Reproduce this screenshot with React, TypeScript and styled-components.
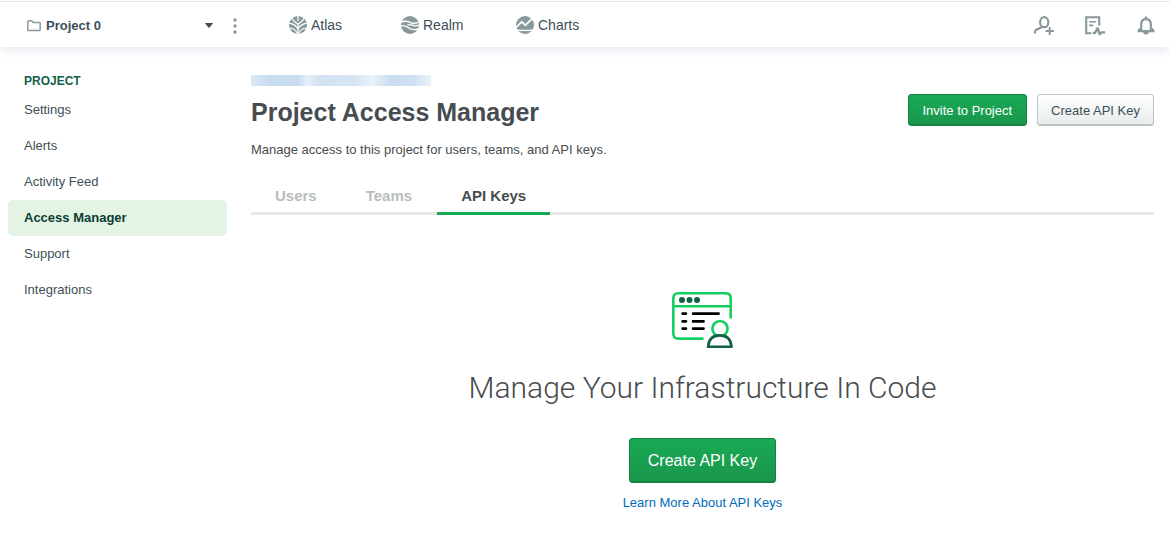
import React from "react";
import styled, { createGlobalStyle } from "styled-components";

const GlobalStyle = createGlobalStyle`
  *, *::before, *::after { box-sizing: border-box; }
  body {
    margin: 0;
    background: #fff;
    color: #464c4f;
    font-family: "Liberation Sans", Arial, sans-serif;
    font-size: 13px;
    line-height: 20px;
  }
  h1, h2, p, ul { margin: 0; padding: 0; }
  button { font-family: inherit; cursor: pointer; }
  a { text-decoration: none; }
  svg { display: block; flex: none; }
`;

const TopBar = styled.header`
  display: flex;
  align-items: center;
  height: 47px;
  padding: 3px 13px 0 27px;
  border-top: 1px solid #fff;
  box-shadow: inset 0 1px 0 #e7eaea, 0 2px 10px rgba(40, 50, 110, 0.14);
`;

const PickerMenu = styled.div`
  display: flex;
  align-items: center;
  gap: 11px;
`;

const ProjectPicker = styled.button`
  display: flex;
  align-items: center;
  gap: 5px;
  width: 186px;
  padding: 0;
  border: 0;
  background: none;
  color: #3d4f58;
  font-size: 13px;
  font-weight: 700;
  line-height: 20px;
`;

const PickerName = styled.span`
  flex: 1;
  text-align: left;
`;

const IconButton = styled.button`
  display: flex;
  align-items: center;
  justify-content: center;
  width: 22px;
  height: 24px;
  padding: 0;
  border: 0;
  background: none;
  color: #89989b;
`;

const ProductNav = styled.nav`
  display: grid;
  grid-template-columns: 112px 115px auto;
  margin-left: 43px;
  padding-bottom: 2px;
`;

const ProductLink = styled.a`
  display: flex;
  align-items: center;
  gap: 4px;
  color: #3d4f58;
  font-size: 14px;
`;

const Tools = styled.div`
  display: flex;
  gap: 29px;
  margin-left: auto;
`;

const Body = styled.div`
  display: flex;
  gap: 24px;
  padding: 24px 16px 24px 8px;
`;

const Sidebar = styled.nav`
  flex: none;
  width: 219px;
`;

const SidebarTitle = styled.h2`
  padding: 0 16px 1px;
  color: #116149;
  font-size: 12px;
  font-weight: 700;
  line-height: 20px;
`;

const SidebarList = styled.ul`
  list-style: none;
`;

const SidebarLink = styled.a<{ $active?: boolean }>`
  display: block;
  padding: 8px 16px;
  border-radius: 5px;
  background: ${(p) => (p.$active ? "#e4f4e4" : "transparent")};
  color: ${(p) => (p.$active ? "#0b3b35" : "#3d4f58")};
  font-weight: ${(p) => (p.$active ? 700 : 400)};
`;

const Main = styled.main`
  flex: 1;
  min-width: 0;
  padding-top: 4px;
`;

const Redacted = styled.div`
  width: 180px;
  height: 11px;
  background: linear-gradient(
    90deg,
    #dce9f5 0%, #c8dcf0 10%, #c8dcf0 26%, #e6eff8 31%, #d3e3f3 38%,
    #d6e5f4 58%, #eaf2f9 67%, #c9ddf0 78%, #cfe0f2 90%, #eaf2f9 100%
  );
`;

const PageHead = styled.div`
  display: flex;
  align-items: flex-start;
  justify-content: space-between;
  padding-top: 8px;
`;

const Title = styled.h1`
  font-size: 25px;
  font-weight: 700;
  line-height: 36px;
`;

const Actions = styled.div`
  display: flex;
  gap: 10px;
`;

const Button = styled.button<{ $primary?: boolean; $large?: boolean }>`
  height: ${(p) => (p.$large ? 45 : 32)}px;
  padding: 0 ${(p) => (p.$large ? 18 : p.$primary ? 14 : 13)}px;
  border: 1px solid ${(p) => (p.$primary ? "#158242" : "#b8c4c2")};
  border-radius: 3px;
  background: ${(p) =>
    p.$primary
      ? "linear-gradient(#18a955, #1b964c)"
      : "linear-gradient(#fff, #e7edec)"};
  box-shadow: inset 0 -1px 0 ${(p) => (p.$primary ? "#158242" : "#b8c4c2")};
  color: ${(p) => (p.$primary ? "#fff" : "#3d4f58")};
  font-size: ${(p) => (p.$large ? 16 : 13)}px;
`;

const Lead = styled.p`
  padding-top: 10px;
`;

const Tabs = styled.div`
  display: flex;
  gap: 1px;
  margin-top: 22px;
  box-shadow: inset 0 -3px 0 #e7e8e8;
`;

const Tab = styled.button<{ $active?: boolean }>`
  padding: 4px 24px 6px;
  border: 0;
  border-bottom: 3px solid ${(p) => (p.$active ? "#13aa52" : "transparent")};
  background: none;
  color: ${(p) => (p.$active ? "#464c4f" : "#b9bdbd")};
  font-size: 15px;
  font-weight: 700;
  line-height: 20px;
`;

const EmptyState = styled.section`
  display: flex;
  flex-direction: column;
  align-items: center;
  padding-top: 77px;
`;

const EmptyTitle = styled.h2`
  padding: 18px 0 28px;
  font-family: Roboto, "Liberation Sans", sans-serif;
  font-size: 30px;
  font-weight: 300;
  line-height: 44px;
`;

const TextLink = styled.a`
  padding-top: 10px;
  color: #006cbc;
`;

const FolderIcon = () => (
  <svg width="14" height="12" viewBox="0 0 14 12" fill="none" stroke="#89989b" strokeWidth="1.5" strokeLinejoin="round">
    <path d="M.8 9.6V1.8Q.8.8 1.8.8H4.6L6.4 2.6H12.2Q13.2 2.6 13.2 3.6V9.6Q13.2 10.6 12.2 10.6H1.8Q.8 10.6.8 9.6Z" />
  </svg>
);

const CaretIcon = () => (
  <svg width="8" height="5" viewBox="0 0 8 5">
    <path d="M.5 0H7.5Q8.2 0 7.7.7L4.5 4.6Q4 5.1 3.5 4.6L.3.7Q-.2 0 .5 0Z" fill="#3d4f58" />
  </svg>
);

const DotsIcon = () => (
  <svg width="4" height="16" viewBox="0 0 4 16" fill="currentColor">
    <circle cx="2" cy="2" r="1.7" />
    <circle cx="2" cy="8" r="1.7" />
    <circle cx="2" cy="14" r="1.7" />
  </svg>
);

const AtlasIcon = () => (
  <svg width="18" height="18" viewBox="0 0 18 18">
    <circle cx="9" cy="9" r="9" fill="#89989b" />
    <g fill="none" stroke="#fff" strokeWidth="1.2">
      <path d="M9 0V5M9 8V18" />
      <path d="M2.8 2.4Q5.2 6 9 8.2Q12.8 6 15.2 2.4" />
      <path d="M0 7.2Q6.4 8.4 9 12.8Q11.6 8.4 18 7.2" />
      <path d="M.6 12Q6.4 12.4 8.2 17.6M17.4 12Q11.6 12.4 9.8 17.6" />
    </g>
  </svg>
);

const RealmIcon = () => (
  <svg width="18" height="18" viewBox="0 0 18 18">
    <circle cx="9" cy="9" r="9" fill="#89989b" />
    <g fill="none" stroke="#fff" strokeWidth="1.3">
      <path d="M0 6.2C4 4.4 6.6 5.2 9 6.4S14 7.8 18 6" />
      <path d="M6.4 9.2C9.4 7.8 11 9.4 13.4 9.8S16.8 9.4 18 9" />
      <path d="M0 9.8C4 9.2 6.8 11.4 9.4 12.8S14.6 13.8 17.4 12.8" />
    </g>
  </svg>
);

const ChartsIcon = () => (
  <svg width="18" height="18" viewBox="0 0 18 18">
    <circle cx="9" cy="9" r="9" fill="#89989b" />
    <path d="M0 11.4L5.8 5.8L9.4 9.2L15.8 2.8" fill="none" stroke="#fff" strokeWidth="1.7" />
    <path d="M0 14.4H18" stroke="#fff" strokeWidth="1.4" />
  </svg>
);

const InviteIcon = () => (
  <svg width="22" height="20" viewBox="0 0 22 20" fill="none" stroke="currentColor" strokeWidth="2.2">
    <ellipse cx="11.2" cy="6.2" rx="4.1" ry="5" />
    <path d="M2 17.4V16Q2 14.2 3.6 13.4L8.8 11.2V10" />
    <path d="M16.7 11V19M12.6 15H21" strokeWidth="2" />
  </svg>
);

const ActivityIcon = () => (
  <svg width="22" height="20" viewBox="0 0 22 20" fill="none" stroke="currentColor" strokeWidth="2.1">
    <path d="M7.4 17.2H2.2V1.2H15.2V9.4" />
    <path d="M5.2 5.8H12.2M5.2 9.4H9.2" strokeWidth="1.6" />
    <path d="M8.8 17H11L13.6 11.8L15.8 18.6L17.4 16.4H21.2" strokeWidth="2.4" strokeLinejoin="bevel" />
  </svg>
);

const BellIcon = () => (
  <svg width="18" height="19" viewBox="0 0 18 19">
    <path
      d="M4.2 14V8.4Q4.2 3.2 9 3.2T13.8 8.4V14"
      fill="none"
      stroke="currentColor"
      strokeWidth="2.2"
    />
    <path
      d="M7.6 3V1.4Q7.6.4 9 .4T10.4 1.4V3ZM3.1 11.4L.6 14V16.2H17.4V14L14.9 11.4V14H3.1ZM6 16.2H12Q11.6 18.6 9 18.6T6 16.2Z"
      fill="currentColor"
    />
  </svg>
);

const CodeIllustration = () => (
  <svg width="61" height="56" viewBox="0 0 61 56" fill="none" strokeWidth="2.6">
    <path d="M31.5 46.6H6.3Q1.3 46.6 1.3 41.6V6.3Q1.3 1.3 6.3 1.3H53.7Q58.7 1.3 58.7 6.3V26.4M1.3 14.3H58.7" stroke="#13cf60" />
    <g fill="#116149">
      <circle cx="10" cy="8" r="3" />
      <circle cx="17.5" cy="8" r="3" />
      <circle cx="25" cy="8" r="3" />
    </g>
    <path d="M10.6 21.6H14M21 21.6H46.6M10.6 29.4H14M21 29.4H31.6M10.6 36.6H14M21 36.6H31.6" stroke="#000" strokeLinecap="round" />
    <circle cx="48" cy="36.6" r="7.6" stroke="#13cf60" />
    <path d="M36.2 54.7C36.6 47 40.6 43.4 47.8 43.4S59 47 59.4 54.7Z" fill="#fff" stroke="#116149" />
  </svg>
);

const products = [
  { name: "Atlas", icon: <AtlasIcon /> },
  { name: "Realm", icon: <RealmIcon /> },
  { name: "Charts", icon: <ChartsIcon /> },
];

const sections = ["Settings", "Alerts", "Activity Feed", "Access Manager", "Support", "Integrations"];
const tabs = ["Users", "Teams", "API Keys"];

export default function App() {
  return (
    <>
      <GlobalStyle />
      <TopBar>
        <PickerMenu>
          <ProjectPicker>
            <FolderIcon />
            <PickerName>Project 0</PickerName>
            <CaretIcon />
          </ProjectPicker>
          <IconButton aria-label="Project options">
            <DotsIcon />
          </IconButton>
        </PickerMenu>
        <ProductNav>
          {products.map((p) => (
            <ProductLink key={p.name} href="#">
              {p.icon}
              {p.name}
            </ProductLink>
          ))}
        </ProductNav>
        <Tools>
          <IconButton aria-label="Invite"><InviteIcon /></IconButton>
          <IconButton aria-label="Activity"><ActivityIcon /></IconButton>
          <IconButton aria-label="Alerts"><BellIcon /></IconButton>
        </Tools>
      </TopBar>
      <Body>
        <Sidebar>
          <SidebarTitle>PROJECT</SidebarTitle>
          <SidebarList>
            {sections.map((s) => (
              <li key={s}>
                <SidebarLink href="#" $active={s === "Access Manager"}>{s}</SidebarLink>
              </li>
            ))}
          </SidebarList>
        </Sidebar>
        <Main>
          <Redacted />
          <PageHead>
            <Title>Project Access Manager</Title>
            <Actions>
              <Button $primary>Invite to Project</Button>
              <Button>Create API Key</Button>
            </Actions>
          </PageHead>
          <Lead>Manage access to this project for users, teams, and API keys.</Lead>
          <Tabs role="tablist">
            {tabs.map((t) => (
              <Tab key={t} role="tab" aria-selected={t === "API Keys"} $active={t === "API Keys"}>{t}</Tab>
            ))}
          </Tabs>
          <EmptyState>
            <CodeIllustration />
            <EmptyTitle>Manage Your Infrastructure In Code</EmptyTitle>
            <Button $primary $large>Create API Key</Button>
            <TextLink href="#">Learn More About API Keys</TextLink>
          </EmptyState>
        </Main>
      </Body>
    </>
  );
}
